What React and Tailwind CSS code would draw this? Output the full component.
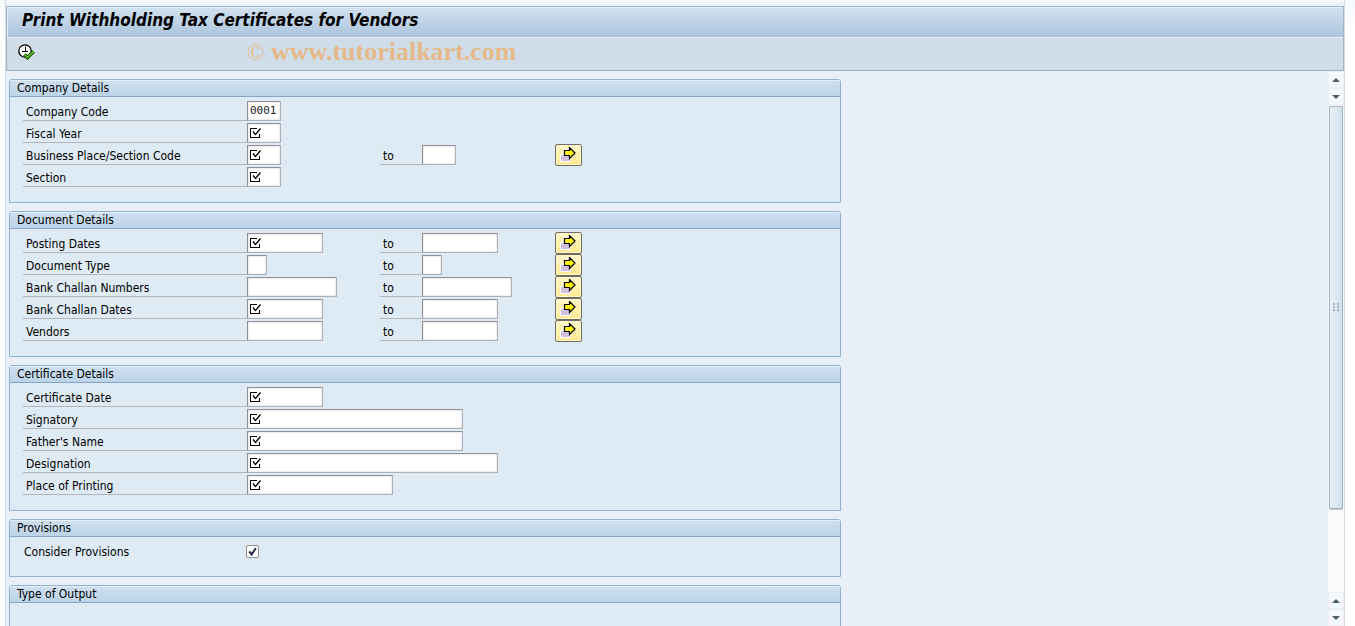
import React from "react";

const companyRows = [
  { id: "company-code", label: "Company Code", width: "w-[34px]", value: "0001" },
  { id: "fiscal-year", label: "Fiscal Year", width: "w-[34px]", required: true },
  { id: "business-place", label: "Business Place/Section Code", width: "w-[34px]", required: true, range: true },
  { id: "section", label: "Section", width: "w-[34px]", required: true },
];

const documentRows = [
  { id: "posting-dates", label: "Posting Dates", width: "w-[76px]", required: true, range: true },
  { id: "document-type", label: "Document Type", width: "w-[20px]", range: true },
  { id: "challan-numbers", label: "Bank Challan Numbers", width: "w-[90px]", range: true },
  { id: "challan-dates", label: "Bank Challan Dates", width: "w-[76px]", required: true, range: true },
  { id: "vendors", label: "Vendors", width: "w-[76px]", range: true },
];

const certificateRows = [
  { id: "certificate-date", label: "Certificate Date", width: "w-[76px]", required: true },
  { id: "signatory", label: "Signatory", width: "w-[216px]", required: true },
  { id: "fathers-name", label: "Father's Name", width: "w-[216px]", required: true },
  { id: "designation", label: "Designation", width: "w-[251px]", required: true },
  { id: "place", label: "Place of Printing", width: "w-[146px]", required: true },
];

const RequiredIcon = () => (
  <svg className="ml-px shrink-0" width="12" height="12" viewBox="0 0 12 12" fill="none" stroke="#000" aria-hidden="true">
    <path d="M8 1.5H1.5v9h9V7" shapeRendering="crispEdges" />
    <path d="M4 4.5l2.5 3L11.5 1.5" strokeWidth="1.3" />
  </svg>
);

const ArrowIcon = () => (
  <svg width="17" height="16" viewBox="0 0 17 16" aria-hidden="true">
    <path d="M0.5 7.5h10v7h-10z" fill="#d3bfdf" stroke="#fff" />
    <path d="M4.5 3.5h5v-3l5.5 5.5-5.5 5.5v-3h-5z" fill="#fff200" stroke="#000" strokeWidth="1.2" />
  </svg>
);

const ExecuteIcon = () => (
  <svg width="17" height="16" viewBox="0 0 17 16" fill="none" aria-hidden="true">
    <circle cx="7" cy="7" r="6.2" fill="#fff" stroke="#000" strokeWidth="1.3" />
    <path d="M7.5 2.5v5M4 7.5h6" stroke="#000" />
    <path d="M6.5 10.5l3 3 6-6" stroke="#0b3d00" strokeWidth="3.6" />
    <path d="M6.5 10.5l3 3 6-6" stroke="#5cb81c" strokeWidth="1.8" />
  </svg>
);

const Field = ({ id, width, required, value }) => (
  <span
    className={`flex h-[20px] items-center border border-t-[#8f9094] border-l-[#8f9094] border-r-[#adb0b4] border-b-[#adb0b4] bg-white shadow-[inset_0_0_2px_#c4c6cc] ${width}`}
  >
    {required && <RequiredIcon />}
    <input
      id={id}
      type="text"
      defaultValue={value}
      className="min-w-0 flex-1 bg-transparent px-[2px] font-['DejaVu_Sans_Mono',monospace] text-[11px] text-[#222] outline-none"
    />
  </span>
);

const Row = ({ id, label, width, required, value, range }) => (
  <div className="flex h-[22px] items-center">
    <label htmlFor={id} className="h-[20px] w-[224px] border-b border-[#b3b5b8] pl-[3px] leading-[22px]">
      {label}
    </label>
    <div className="w-[133px]">
      <Field id={id} width={width} required={required} value={value} />
    </div>
    {range && (
      <>
        <label htmlFor={`${id}-to`} className="h-[20px] w-[42px] border-b border-[#b3b5b8] pl-[3px] leading-[22px]">
          to
        </label>
        <div className="w-[133px]">
          <Field id={`${id}-to`} width={width} />
        </div>
        <button
          type="button"
          aria-label={`Multiple selection for ${label}`}
          className="flex h-[22px] w-[27px] items-center justify-center rounded-[2px] border border-[#6f6d62] bg-linear-to-b from-[#fff8cf] to-[#ffe88c] shadow-[inset_0_0_0_1px_#fff6cc]"
        >
          <ArrowIcon />
        </button>
      </>
    )}
  </div>
);

const Panel = ({ title, children }) => (
  <section className="rounded-t-[3px] border border-[#8fb2d3] bg-[#deeaf4]">
    <h2 className="h-[17px] rounded-t-[2px] border-b border-[#87a5c8] bg-linear-to-b from-[#cfdff0] to-[#bcd4e8] pl-[7px] leading-[16px] shadow-[inset_0_1px_0_#e6f1fa]">
      {title}
    </h2>
    <div className="pt-[3px] pb-[14px] pl-[13px]">{children}</div>
  </section>
);

const ScrollButton = ({ label, down }) => (
  <button type="button" aria-label={label} className="flex h-[17px] items-center justify-center border border-[#ebedf2] bg-[#f5f8fc]">
    <svg width="8" height="4" viewBox="0 0 8 4" fill="#4a5f70" aria-hidden="true">
      <path d={down ? "M0 0h8L4 4z" : "M0 4h8L4 0z"} />
    </svg>
  </button>
);

const Scrollbar = () => (
  <div className="flex w-[16px] flex-col bg-[#fafbfc]">
    <ScrollButton label="Scroll to top" />
    <ScrollButton label="Scroll down" down />
    <div className="flex flex-1 flex-col pt-px">
      <div className="mx-px flex basis-[83%] items-center justify-center rounded-[1px] border border-[#9fb1c0] bg-linear-to-r from-[#e9f1f8] to-[#d2e1ec] shadow-[0_1px_1px_#c3ccd4]">
        <svg width="7" height="9" viewBox="0 0 7 9" fill="#a3b5c4" shapeRendering="crispEdges" aria-hidden="true">
          <path d="M0 0h2v2H0zM4 0h2v2H4zM0 3h2v2H0zM4 3h2v2H4zM0 6h2v2H0zM4 6h2v2H4z" />
        </svg>
      </div>
    </div>
    <ScrollButton label="Scroll up" />
    <ScrollButton label="Scroll to bottom" down />
  </div>
);

export default function App() {
  return (
    <div className="flex h-screen flex-col overflow-hidden bg-linear-to-b from-[#f5f8fc] via-white via-5% to-white pr-[10px] pl-[5px] font-['DejaVu_Sans_Condensed','Noto_Sans',sans-serif] text-[12px] text-black">
      <div className="flex min-h-0 flex-1 flex-col border-x border-[#d5dbe8] bg-linear-to-b from-[#f8fafd] to-[#e8eff6] to-1% pt-[6px]">
        <header className="border border-[#9fb2c6] bg-[#cfdde8]">
          <h1 className="h-[30px] bg-linear-to-b from-[#d2e2ef] to-[#abc4dd] pl-[15px] text-[17px] leading-[27px] font-bold italic shadow-[inset_1px_1px_0_#e5eef6]">
            Print Withholding Tax Certificates for Vendors
          </h1>
          <div className="flex h-[33px] items-center border-t border-[#e9f1f7] pb-[4px] pl-[11px]">
            <button type="button" aria-label="Execute" className="mr-[212px]">
              <ExecuteIcon />
            </button>
            <p className="font-['Liberation_Serif',serif] text-[26px] leading-[28px] font-bold text-[#e5b98a]">
              <span className="text-[23px] font-normal">©</span> www.tutorialkart.com
            </p>
          </div>
        </header>
        <div className="flex min-h-0 flex-1">
          <main className="flex-1 overflow-hidden pt-[8px] pl-[3px]">
            <form className="flex max-w-[832px] flex-col gap-[8px]">
              <Panel title="Company Details">
                {companyRows.map((row) => (
                  <Row key={row.id} {...row} />
                ))}
              </Panel>
              <Panel title="Document Details">
                {documentRows.map((row) => (
                  <Row key={row.id} {...row} />
                ))}
              </Panel>
              <Panel title="Certificate Details">
                {certificateRows.map((row) => (
                  <Row key={row.id} {...row} />
                ))}
              </Panel>
              <Panel title="Provisions">
                <div className="flex h-[22px] items-center">
                  <label htmlFor="provisions" className="h-[20px] w-[223px] pl-px leading-[22px]">
                    Consider Provisions
                  </label>
                  <span className="grid size-[13px]">
                    <input
                      id="provisions"
                      type="checkbox"
                      defaultChecked
                      className="peer col-start-1 row-start-1 size-[13px] appearance-none rounded-[2px] border border-[#8e8f8f] bg-white"
                    />
                    <svg
                      className="pointer-events-none invisible col-start-1 row-start-1 peer-checked:visible"
                      width="13"
                      height="13"
                      viewBox="0 0 13 13"
                      fill="none"
                      stroke="#2b2c48"
                      strokeWidth="2"
                      aria-hidden="true"
                    >
                      <path d="M3.2 6.5l2.5 3L9.8 3" />
                    </svg>
                  </span>
                </div>
              </Panel>
              <Panel title="Type of Output">
                <div className="h-[44px]" />
              </Panel>
            </form>
          </main>
          <Scrollbar />
        </div>
      </div>
    </div>
  );
}
